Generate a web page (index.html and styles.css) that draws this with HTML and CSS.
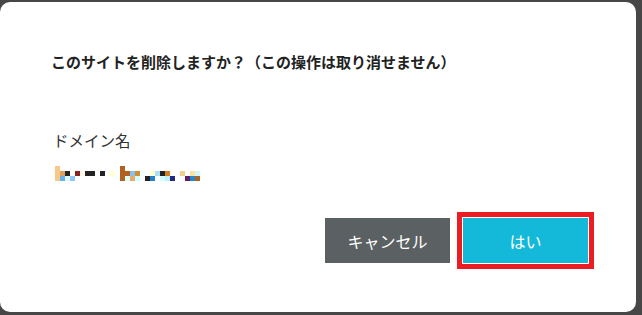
FILE: index.html
```html
<!DOCTYPE html>
<html lang="ja">
<head>
<meta charset="utf-8">
<link rel="stylesheet" href="styles.css">
</head>
<body>
<div class="modal">
  <h2 class="title">このサイトを削除しますか？（この操作は取り消せません）</h2>
  <div class="field">
    <div class="label">ドメイン名</div>
    <div class="mosaic" aria-label="domain (hidden)">
      <span class="c"><i style="background:#f8c888"></i><i style="background:#f8c888"></i><i style="background:#f8c888"></i></span>
      <span class="c"><i></i><i style="background:#e0a060"></i><i style="background:#68b0e8"></i></span>
      <span class="c"><i></i><i style="background:#232323"></i><i style="background:#e0f8ff"></i></span>
      <span class="c"><i></i><i></i><i style="background:#90c8f8"></i></span>
      <span class="c"><i></i><i style="background:#882424"></i><i></i></span>
      <span class="c"><i></i><i style="background:#fffbe8"></i><i></i></span>
      <span class="c"><i></i><i style="background:#232323"></i><i></i></span>
      <span class="c"><i></i><i style="background:#232323"></i><i></i></span>
      <span class="c"><i></i><i></i><i></i></span>
      <span class="c"><i></i><i style="background:#232323"></i><i></i></span>
      <span class="c"><i></i><i></i><i></i></span>
      <span class="c"><i></i><i style="background:#ffffd0"></i><i></i></span>
      <span class="c"><i></i><i></i><i></i></span>
      <span class="c"><i style="background:#b06020"></i><i style="background:#b06020"></i><i style="background:#b06020"></i></span>
      <span class="c"><i></i><i style="background:#b06020"></i><i style="background:#d8fff8"></i></span>
      <span class="c"><i></i><i style="background:#88c0f0"></i><i style="background:#e8a870"></i></span>
      <span class="c"><i></i><i style="background:#d09030"></i><i style="background:#d0ffff"></i></span>
      <span class="c"><i></i><i style="background:#f0ffff"></i><i></i></span>
      <span class="c"><i></i><i></i><i style="background:#232323"></i></span>
      <span class="c"><i></i><i style="background:#ffffd0"></i><i style="background:#2080d0"></i></span>
      <span class="c"><i></i><i style="background:#a8e0f8"></i><i></i></span>
      <span class="c"><i></i><i style="background:#232323"></i><i style="background:#d0ffff"></i></span>
      <span class="c"><i></i><i style="background:#d08020"></i><i style="background:#c0f0f8"></i></span>
      <span class="c"><i></i><i></i><i style="background:#202880"></i></span>
      <span class="c"><i></i><i></i><i></i></span>
      <span class="c"><i></i><i style="background:#f0d090"></i><i></i></span>
      <span class="c"><i></i><i></i><i style="background:#602060"></i></span>
      <span class="c"><i></i><i style="background:#ffe0a0"></i><i style="background:#2088d0"></i></span>
      <span class="c"><i></i><i style="background:#d0f8f8"></i><i style="background:#b06020"></i></span>
    </div>
  </div>
  <div class="actions">
    <button class="btn btn-cancel" type="button">キャンセル</button>
    <button class="btn btn-ok" type="button">はい</button>
  </div>
</div>
</body>
</html>
```

FILE: styles.css
```css
html, body {
  margin: 0;
  padding: 0;
}
body {
  background: #474747;
  width: 642px;
  height: 315px;
  overflow: hidden;
  font-family: "Noto Sans CJK JP", "Noto Sans", sans-serif;
}
.modal {
  margin-top: 2px;
  width: 636px;
  height: 310px;
  background: #ffffff;
  border-radius: 10px;
  box-sizing: border-box;
  padding: 49px 0 0 51px;
  display: flex;
  flex-direction: column;
}
.title {
  margin: 0;
  font-size: 15px;
  font-weight: 700;
  line-height: 22px;
  color: #222222;
}
.field {
  margin-top: 56px;
}
.label {
  font-size: 15.5px;
  line-height: 22px;
  color: #333333;
  padding-left: 2px;
}
.mosaic {
  margin-top: 15px;
  margin-left: 4px;
  display: flex;
  height: 15px;
}
.c {
  display: flex;
  flex-direction: column;
  width: 5px;
}
.c i {
  display: block;
  height: 5px;
  width: 5px;
}
.actions {
  margin-top: 36px;
  display: flex;
  justify-content: flex-end;
  align-items: center;
  gap: 12px;
  padding-right: 47px;
}
.btn {
  font-family: "Noto Sans CJK JP", "Noto Sans", sans-serif;
  font-size: 16px;
  color: #ffffff;
  border: none;
  margin: 0;
  padding: 0;
  cursor: pointer;
}
.btn-cancel {
  width: 125px;
  height: 45px;
  background: #5b6162;
}
.btn-ok {
  width: 127px;
  height: 47px;
  background: #14b8d8;
  border: 1px solid #ffffff;
  outline: 5px solid #ec1c24;
}
```
